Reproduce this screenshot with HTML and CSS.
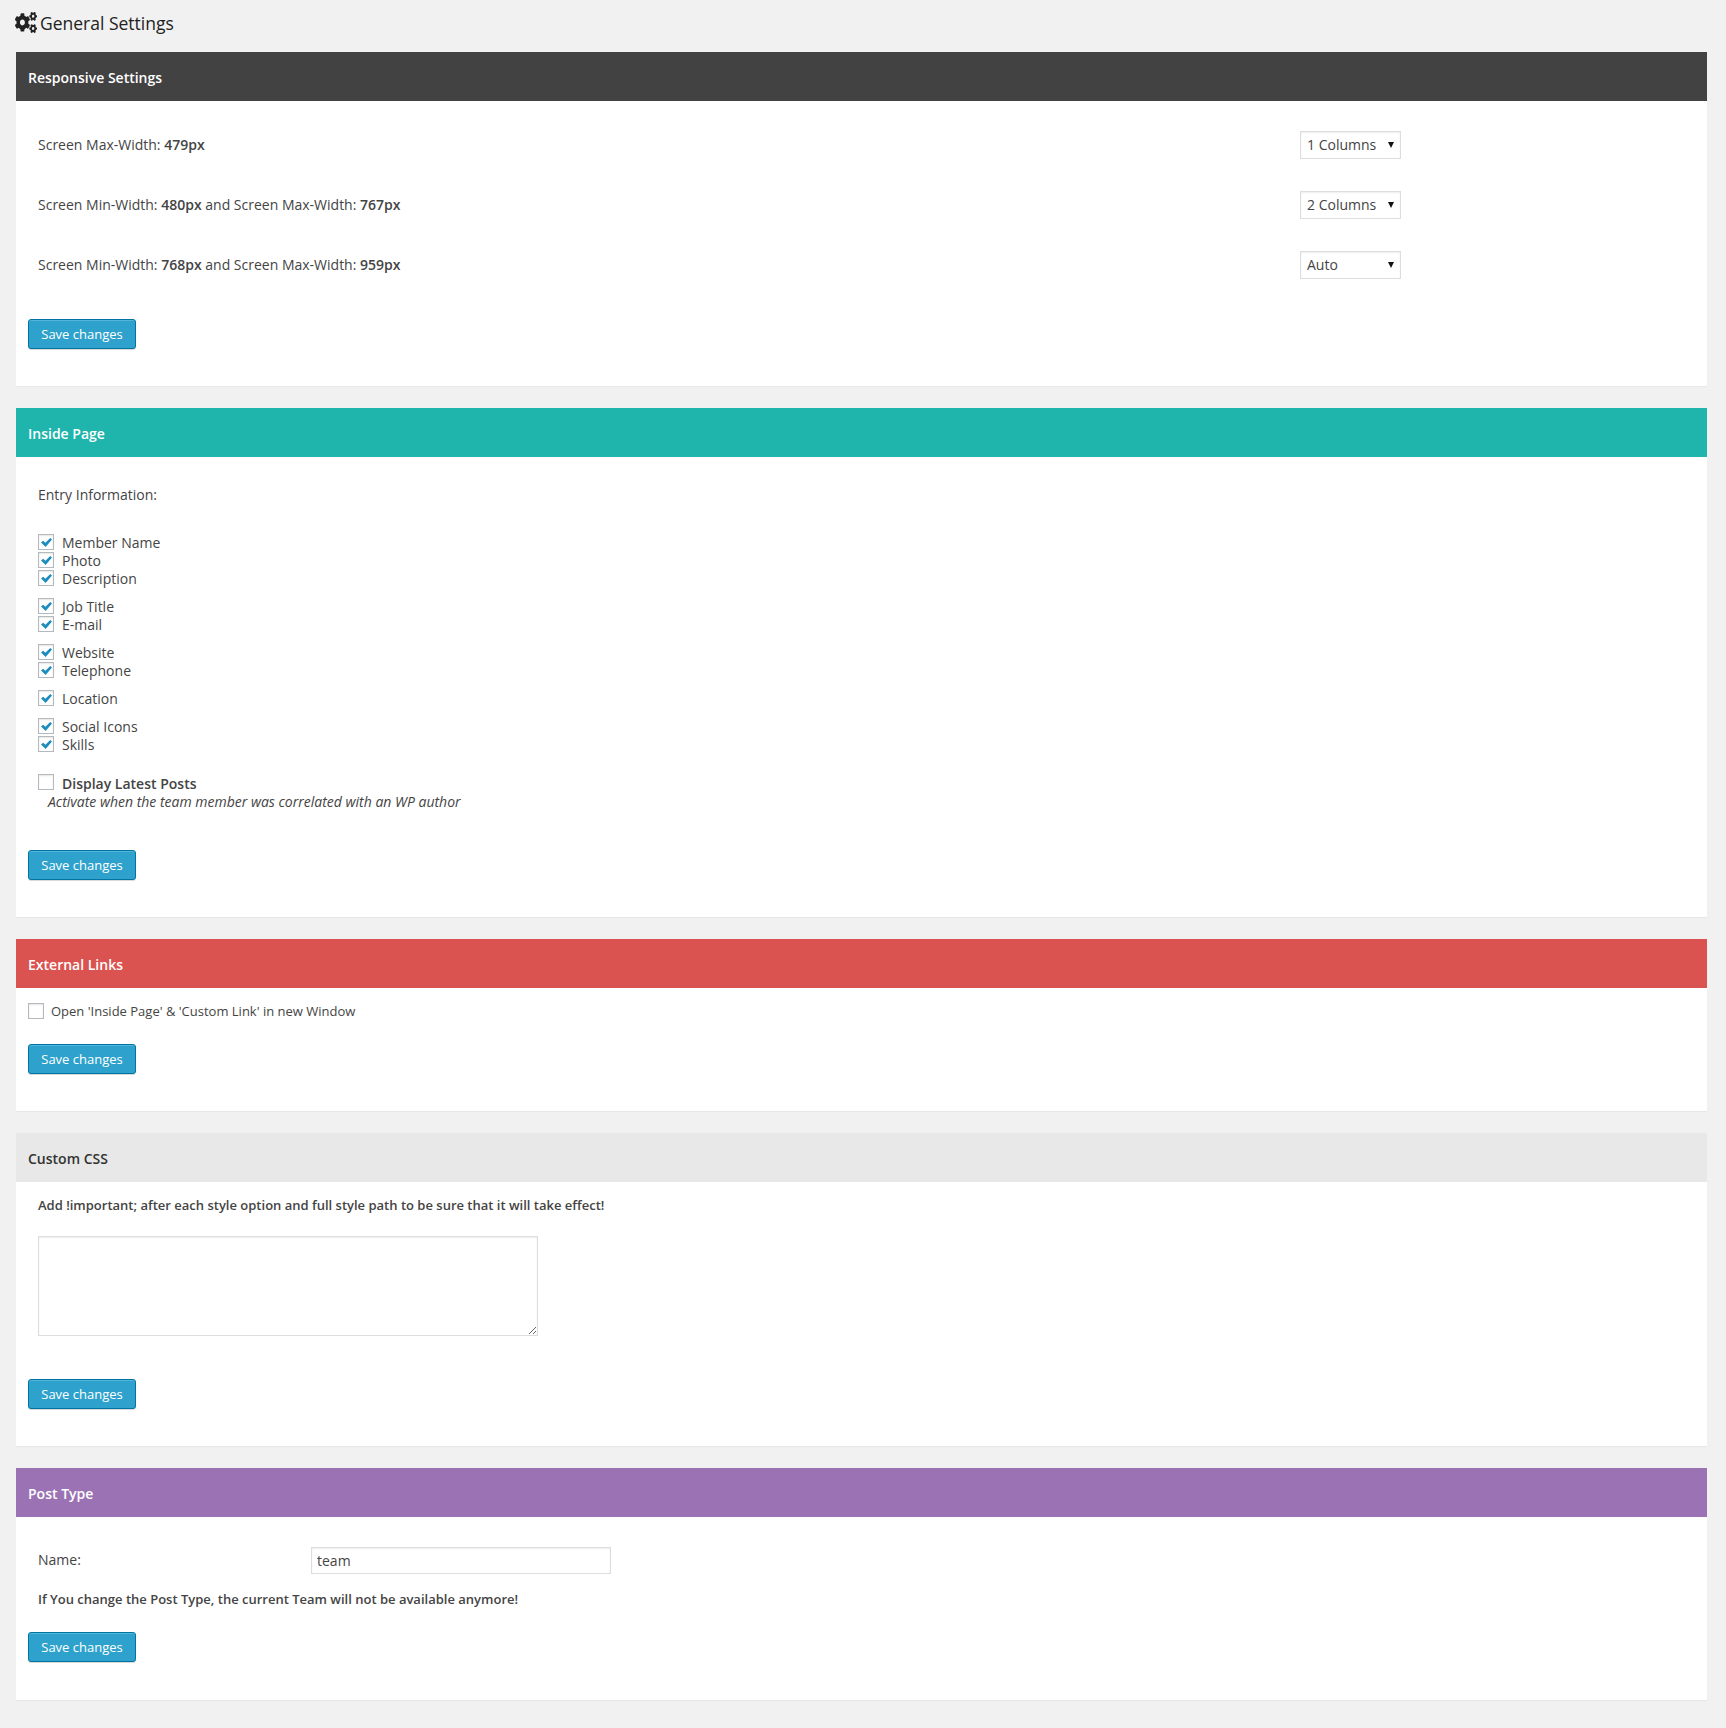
FILE: index.html
```html
<!DOCTYPE html>
<html lang="en">
<head>
<meta charset="utf-8">
<title>General Settings</title>
<link rel="stylesheet" href="styles.css">
</head>
<body>
<h1 class="page-title">
<svg class="cogs" viewBox="0 0 640 512" preserveAspectRatio="none" aria-hidden="true"><path d="M512.1 191l-8.2 14.3c-3 5.3-9.4 7.5-15.1 5.4-11.8-4.4-22.6-10.7-32.1-18.6-4.6-3.8-5.8-10.5-2.8-15.7l8.2-14.3c-6.9-8-12.3-17.3-15.9-27.4h-16.5c-6 0-11.2-4.3-12.2-10.3-2-12-2.1-24.6 0-37.1 1-6 6.2-10.4 12.2-10.4h16.5c3.6-10.1 9-19.4 15.9-27.4l-8.2-14.3c-3-5.2-1.9-11.9 2.8-15.7 9.5-7.9 20.4-14.2 32.1-18.6 5.7-2.1 12.1.1 15.1 5.4l8.2 14.3c10.5-1.9 21.2-1.9 31.7 0L552 6.3c3-5.3 9.4-7.5 15.1-5.4 11.8 4.4 22.6 10.7 32.1 18.6 4.6 3.8 5.8 10.5 2.8 15.7l-8.2 14.3c6.9 8 12.3 17.3 15.9 27.4h16.5c6 0 11.2 4.3 12.2 10.3 2 12 2.1 24.6 0 37.1-1 6-6.2 10.4-12.2 10.4h-16.5c-3.6 10.1-9 19.4-15.9 27.4l8.2 14.3c3 5.2 1.9 11.9-2.8 15.7-9.5 7.9-20.4 14.2-32.1 18.6-5.7 2.1-12.1-.1-15.1-5.4l-8.2-14.3c-10.4 1.9-21.2 1.9-31.7 0zm-10.5-58.8c38.5 29.6 82.4-14.3 52.8-52.8-38.5-29.7-82.4 14.3-52.8 52.8zM386.3 286.1l33.7 16.8c10.1 5.8 14.5 18.1 10.5 29.1-8.9 24.2-26.4 46.4-42.6 65.8-7.4 8.9-20.2 11.1-30.3 5.3l-29.1-16.8c-16 13.7-34.6 24.6-54.9 31.7v33.6c0 11.6-8.3 21.6-19.7 23.6-24.6 4.2-50.4 4.4-75.9 0-11.5-2-20-11.9-20-23.6V418c-20.3-7.2-38.9-18-54.9-31.7L74 403c-10 5.8-22.9 3.6-30.3-5.3-16.2-19.4-33.3-41.6-42.2-65.7-4-10.9.4-23.2 10.5-29.1l33.3-16.8c-3.9-20.9-3.9-42.4 0-63.4L12 205.8c-10.1-5.8-14.6-18.1-10.5-29 8.9-24.2 26-46.4 42.2-65.8 7.4-8.9 20.2-11.1 30.3-5.3l29.1 16.8c16-13.7 34.6-24.6 54.9-31.7V57.1c0-11.5 8.2-21.5 19.6-23.5 24.6-4.2 50.5-4.4 76-.1 11.5 2 20 11.9 20 23.6v33.6c20.3 7.2 38.9 18 54.9 31.7l29.1-16.8c10-5.8 22.9-3.6 30.3 5.3 16.2 19.4 33.2 41.6 42.1 65.8 4 10.9.1 23.2-10 29.1l-33.7 16.8c3.9 21 3.9 42.5 0 63.5zm-117.6 21.1c59.2-77-28.7-164.9-105.7-105.7-59.2 77 28.7 164.9 105.7 105.7zm243.4 182.7l-8.2 14.3c-3 5.3-9.4 7.5-15.1 5.4-11.8-4.4-22.6-10.7-32.1-18.6-4.6-3.8-5.8-10.5-2.8-15.7l8.2-14.3c-6.9-8-12.3-17.3-15.9-27.4h-16.5c-6 0-11.2-4.3-12.2-10.3-2-12-2.1-24.6 0-37.1 1-6 6.2-10.4 12.2-10.4h16.5c3.6-10.1 9-19.4 15.9-27.4l-8.2-14.3c-3-5.2-1.9-11.9 2.8-15.7 9.5-7.9 20.4-14.2 32.1-18.6 5.7-2.1 12.1.1 15.1 5.4l8.2 14.3c10.5-1.9 21.2-1.9 31.7 0l8.2-14.3c3-5.3 9.4-7.5 15.1-5.4 11.8 4.4 22.6 10.7 32.1 18.6 4.6 3.8 5.8 10.5 2.8 15.7l-8.2 14.3c6.9 8 12.3 17.3 15.9 27.4h16.5c6 0 11.2 4.3 12.2 10.3 2 12 2.1 24.6 0 37.1-1 6-6.2 10.4-12.2 10.4h-16.5c-3.6 10.1-9 19.4-15.9 27.4l8.2 14.3c3 5.2 1.9 11.9-2.8 15.7-9.5 7.9-20.4 14.2-32.1 18.6-5.7 2.1-12.1-.1-15.1-5.4l-8.2-14.3c-10.4 1.9-21.2 1.9-31.7 0zM501.6 431c38.5 29.6 82.4-14.3 52.8-52.8-38.5-29.6-82.4 14.3-52.8 52.8z"/></svg>
<span>General Settings</span>
</h1>

<section class="panel">
  <h2 class="panel-head head-dark">Responsive Settings</h2>
  <div class="panel-body body-responsive">
    <div class="row">
      <div class="row-label">Screen Max-Width: <b>479px</b></div>
      <span class="select-wrap"><select class="select"><option>1 Columns</option><option>2 Columns</option><option>Auto</option></select></span>
    </div>
    <div class="row">
      <div class="row-label">Screen Min-Width: <b>480px</b> and Screen Max-Width: <b>767px</b></div>
      <span class="select-wrap"><select class="select"><option>2 Columns</option><option>1 Columns</option><option>Auto</option></select></span>
    </div>
    <div class="row">
      <div class="row-label">Screen Min-Width: <b>768px</b> and Screen Max-Width: <b>959px</b></div>
      <span class="select-wrap"><select class="select"><option>Auto</option><option>1 Columns</option><option>2 Columns</option></select></span>
    </div>
    <button class="save save-responsive" type="button">Save changes</button>
  </div>
</section>

<section class="panel">
  <h2 class="panel-head head-teal">Inside Page</h2>
  <div class="panel-body body-inside">
    <p class="entry-title">Entry Information:</p>
    <div class="check-group">
      <label class="check"><input type="checkbox" checked>Member Name</label>
      <label class="check"><input type="checkbox" checked>Photo</label>
      <label class="check"><input type="checkbox" checked>Description</label>
    </div>
    <div class="check-group">
      <label class="check"><input type="checkbox" checked>Job Title</label>
      <label class="check"><input type="checkbox" checked>E-mail</label>
    </div>
    <div class="check-group">
      <label class="check"><input type="checkbox" checked>Website</label>
      <label class="check"><input type="checkbox" checked>Telephone</label>
    </div>
    <div class="check-group">
      <label class="check"><input type="checkbox" checked>Location</label>
    </div>
    <div class="check-group">
      <label class="check"><input type="checkbox" checked>Social Icons</label>
      <label class="check"><input type="checkbox" checked>Skills</label>
    </div>
    <div class="latest">
      <label class="check check-strong"><input type="checkbox">Display Latest Posts</label>
      <em class="latest-note">Activate when the team member was correlated with an WP author</em>
    </div>
    <button class="save save-inside" type="button">Save changes</button>
  </div>
</section>

<section class="panel">
  <h2 class="panel-head head-red">External Links</h2>
  <div class="panel-body body-external">
    <label class="check check-small"><input type="checkbox">Open 'Inside Page' &amp; 'Custom Link' in new Window</label>
    <button class="save save-external" type="button">Save changes</button>
  </div>
</section>

<section class="panel">
  <h2 class="panel-head head-grey">Custom CSS</h2>
  <div class="panel-body body-css">
    <p class="note note-css">Add !important; after each style option and full style path to be sure that it will take effect!</p>
    <textarea class="css-area"></textarea>
    <button class="save save-css" type="button">Save changes</button>
  </div>
</section>

<section class="panel">
  <h2 class="panel-head head-purple">Post Type</h2>
  <div class="panel-body body-post">
    <div class="name-row">
      <label class="name-label" for="post-type">Name:</label>
      <input class="name-input" id="post-type" type="text" value="team">
    </div>
    <p class="note note-post">If You change the Post Type, the current Team will not be available anymore!</p>
    <button class="save save-post" type="button">Save changes</button>
  </div>
</section>
</body>
</html>
```

FILE: styles.css
```css
* { box-sizing: border-box; }
html, body { margin: 0; padding: 0; }
body {
  background: #f1f1f1;
  color: #444;
  font-family: "Open Sans", sans-serif;
  font-size: 14px;
  line-height: 18px;
  padding: 0 19px 28px 16px;
}
.page-title {
  display: flex;
  align-items: center;
  gap: 3px;
  height: 52px;
  margin: 0;
  padding: 0 0 6px 0;
  color: #222;
  font-size: 17.5px;
  font-weight: 500;
}
.cogs { width: 22px; height: 21px; fill: #222; margin-left: -1px; margin-top: -1px; }
.panel {
  background: #fff;
  box-shadow: 0 1px 1px rgba(0,0,0,.04);
  margin-bottom: 22px;
}
.panel-head {
  display: flex;
  align-items: center;
  height: 49px;
  margin: 0;
  padding: 2px 12px 0;
  font-size: 14px;
  font-weight: 600;
  color: #fff;
}
.head-dark { background: #424242; }
.head-teal { background: #1fb5ad; }
.head-red { background: #da5350; }
.head-grey { background: #e8e8e8; color: #333; }
.head-purple { background: #9b72b4; }
.panel-body { padding: 0 12px 37px; }
.body-responsive { padding-top: 14px; }
.row {
  display: flex;
  align-items: center;
  justify-content: space-between;
  height: 60px;
  padding: 0 294px 0 10px;
}
.row-label b { font-weight: 600; }
.select-wrap { position: relative; display: block; width: 101px; height: 28px; }
.select-wrap::after {
  content: "";
  position: absolute;
  right: 7px;
  top: 11px;
  border-style: solid;
  border-width: 6px 3px 0;
  border-color: #111 transparent transparent;
  pointer-events: none;
}
.select {
  appearance: none;
  display: block;
  width: 101px;
  height: 28px;
  padding: 0 6px 2px;
  background: #fff;
  border: 1px solid #ddd;
  box-shadow: inset 0 1px 2px rgba(0,0,0,.07);
  border-radius: 0;
  color: #444;
  font: 14px "Open Sans", sans-serif;
}
.save {
  display: block;
  width: 108px;
  height: 30px;
  padding: 0;
  background: #2ea2cc;
  border: 1px solid #0074a2;
  border-radius: 3px;
  box-shadow: inset 0 1px 0 rgba(120,200,230,.5), 0 1px 0 rgba(0,0,0,.15);
  color: #fff;
  font: 13px/28px "Open Sans", sans-serif;
}
.save-responsive { margin-top: 24px; }
.body-inside { padding-top: 29px; }
.entry-title { margin: 0 0 30px 10px; }
.check-group { margin: 0 0 10px 10px; }
.check {
  display: flex;
  align-items: center;
  height: 18px;
}
.check input {
  appearance: none;
  position: relative;
  flex: none;
  width: 16px;
  height: 16px;
  margin: -2px 8px 0 0;
  background: #fff;
  border: 1px solid #b4b9be;
  box-shadow: inset 0 1px 2px rgba(0,0,0,.1);
}
.check input:checked::before {
  content: "";
  position: absolute;
  left: 2px;
  top: 3px;
  width: 11px;
  height: 9px;
  background: #1e8cbe;
  clip-path: polygon(0 50%, 20% 30%, 40% 52%, 84% 0, 100% 18%, 42% 100%);
}
.latest { margin: 20px 0 0 10px; }
.check-strong { font-weight: 600; height: 19px; color: #444; }
.check-strong input { margin-top: -3px; }
.latest-note { display: block; margin-left: 10px; font-size: 14px; }
.save-inside { margin-top: 39px; }
.body-external { padding-top: 13px; }
.check-small { font-size: 13px; height: 18px; padding-top: 1px; }
.check-small input { margin: 0 7px 0 0; }
.save-external { margin-top: 25px; }
.body-css { padding-top: 14px; }
.note { margin: 0; font-size: 13px; font-weight: 600; }
.note-css { margin-left: 10px; }
.css-area {
  display: block;
  width: 500px;
  height: 100px;
  margin: 22px 0 0 10px;
  border: 1px solid #ddd;
  box-shadow: inset 0 1px 2px rgba(0,0,0,.07);
  background: #fff;
}
.save-css { margin-top: 43px; }
.body-post { padding-top: 30px; padding-bottom: 38px; }
.name-row { display: flex; align-items: center; padding-left: 10px; }
.name-label { width: 273px; padding-bottom: 2px; }
.name-input {
  width: 300px;
  height: 27px;
  padding: 0 5px;
  border: 1px solid #ddd;
  box-shadow: inset 0 1px 2px rgba(0,0,0,.07);
  background: #fff;
  color: #444;
  font: 14px "Open Sans", sans-serif;
  outline: none;
}
.note-post { margin: 16px 0 0 10px; }
.save-post { margin-top: 24px; }
```
